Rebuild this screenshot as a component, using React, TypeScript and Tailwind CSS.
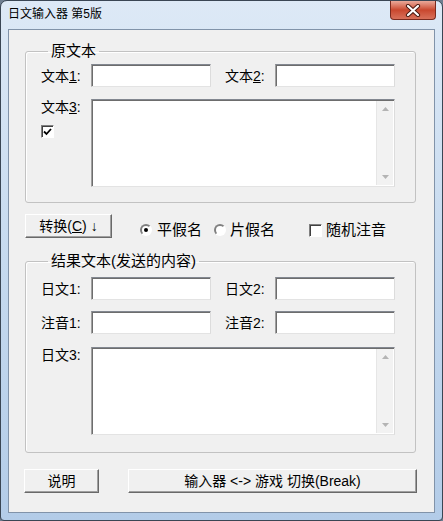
import React from "react";

const font = "font-['Liberation_Sans','Noto_Sans_CJK_SC',sans-serif]";

function Edit({ w }: { w: number }) {
  return (
    <div
      className="h-[23px] bg-white border border-t-[#828790] border-l-[#a0a0a0] border-r-[#dcdcdc] border-b-[#e3e3e3] shadow-[inset_1px_1px_0_#6d6d6d]"
      style={{ width: w }}
    />
  );
}

function Memo() {
  return (
    <div className="w-[304px] h-[88px] flex bg-white border border-t-[#828790] border-l-[#a0a0a0] border-r-[#dcdcdc] border-b-[#e3e3e3] shadow-[inset_1px_1px_0_#6d6d6d]">
      <div className="flex-1" />
      <div className="w-[17px] mt-[1px] mb-[1px] mr-[1px] bg-[#f2f2f2] border-l border-[#e6e6e6] flex flex-col items-center justify-between py-[6px]">
        <svg width="7" height="4" viewBox="0 0 7 4">
          <path d="M0 4 L3.5 0 L7 4 Z" fill="#b4b4b4" />
        </svg>
        <svg width="7" height="4" viewBox="0 0 7 4">
          <path d="M0 0 L3.5 4 L7 0 Z" fill="#b4b4b4" />
        </svg>
      </div>
    </div>
  );
}

function Btn({ w, children, ml }: { w: number; children: React.ReactNode; ml: string }) {
  return (
    <div
      className={`${ml} h-[24px] flex items-center justify-center bg-[#f0f0f0] border border-t-white border-l-white border-r-[#696969] border-b-[#696969] shadow-[inset_-1px_-1px_0_#a0a0a0] text-[14px] leading-[16px] text-black`}
      style={{ width: w }}
    >
      {children}
    </div>
  );
}

function Check({ checked }: { checked?: boolean }) {
  return (
    <span className="w-[13px] h-[13px] bg-white border border-t-[#808080] border-l-[#808080] border-r-white border-b-white shadow-[inset_1px_1px_0_#404040] flex items-center justify-center">
      {checked && (
        <svg width="9" height="8" viewBox="0 0 9 8">
          <path d="M1 3.5 L3.5 6 L8 1" stroke="#000" strokeWidth="1.8" fill="none" />
        </svg>
      )}
    </span>
  );
}

function Radio({ on }: { on?: boolean }) {
  return (
    <span className="w-[12px] h-[12px] rounded-full bg-white border-2 border-t-[#808080] border-l-[#808080] border-r-white border-b-white flex items-center justify-center">
      {on && <span className="w-[4px] h-[4px] rounded-full bg-black" />}
    </span>
  );
}

function Label({ children, className = "" }: { children: React.ReactNode; className?: string }) {
  return <span className={`w-[50px] shrink-0 text-[14px] leading-[16px] ${className}`}>{children}</span>;
}

export default function App() {
  return (
    <div className={`w-[443px] h-[521px] bg-[#6f7f91] ${font} text-black`}>
      <div className="w-[443px] h-[521px] flex flex-col rounded-t-[7px] rounded-b-[4px] border border-[#3a4654] bg-gradient-to-b from-[#dde9f6] via-[#c6daef] to-[#b3cce8] px-[7px] pb-[7px]">
        <div className="h-[28px] flex items-start justify-between">
          <span className="pt-[5px] text-[12px] leading-[16px] text-black">日文输入器 第5版</span>
          <div className="w-[46px] h-[19px] mr-[-1px] rounded-b-[4px] border border-t-0 border-[#7a2a1e] bg-gradient-to-b from-[#e9a99a] via-[#c9472e] to-[#d8705a] flex items-center justify-center">
            <svg width="16" height="13" viewBox="0 0 16 13">
              <path d="M3 2 L13 11 M13 2 L3 11" stroke="#4a1a12" strokeWidth="4.2" strokeLinecap="round" />
              <path d="M3 2 L13 11 M13 2 L3 11" stroke="#fff" strokeWidth="2.2" strokeLinecap="round" />
            </svg>
          </div>
        </div>

        <div className="flex-1 bg-[#f0f0f0] border border-[#8193a9] flex flex-col">
          <fieldset className="ml-[16px] mt-[11px] w-[391px] border border-[#c2c2c2] rounded-[3px] pl-[15px] pb-[15px] shadow-[inset_1px_1px_0_#fff]">
            <legend className="ml-[7px] px-[3px] text-[15px] leading-[20px]">原文本</legend>
            <div className="mt-[3px] flex items-center">
              <Label>
                文本<span className="underline">1</span>:
              </Label>
              <Edit w={120} />
              <Label className="ml-[14px]">
                文本<span className="underline">2</span>:
              </Label>
              <Edit w={120} />
            </div>
            <div className="mt-[12px] flex">
              <div className="w-[50px] flex flex-col">
                <Label>
                  文本<span className="underline">3</span>:
                </Label>
                <span className="mt-[10px]">
                  <Check checked />
                </span>
              </div>
              <Memo />
            </div>
          </fieldset>

          <div className="mt-[11px] h-[24px] flex items-start text-[15px] leading-[18px]">
            <Btn w={87} ml="ml-[16px]">
              转换(<span className="underline">C</span>)&nbsp;↓
            </Btn>
            <span className="ml-[28px] mt-[7px] flex items-center gap-[5px]">
              <Radio on />
              <span>平假名</span>
            </span>
            <span className="ml-[12px] mt-[7px] flex items-center gap-[4px]">
              <Radio />
              <span>片假名</span>
            </span>
            <span className="ml-[34px] mt-[7px] flex items-center gap-[4px]">
              <Check />
              <span>随机注音</span>
            </span>
          </div>

          <fieldset className="ml-[16px] mt-[13px] w-[391px] border border-[#c2c2c2] rounded-[3px] pl-[15px] pb-[17px] shadow-[inset_1px_1px_0_#fff]">
            <legend className="ml-[7px] px-[3px] text-[15px] leading-[20px]">结果文本(发送的内容)</legend>
            <div className="mt-[6px] flex items-center">
              <Label>日文1:</Label>
              <Edit w={120} />
              <Label className="ml-[14px]">日文2:</Label>
              <Edit w={120} />
            </div>
            <div className="mt-[11px] flex items-center">
              <Label>注音1:</Label>
              <Edit w={120} />
              <Label className="ml-[14px]">注音2:</Label>
              <Edit w={120} />
            </div>
            <div className="mt-[13px] flex">
              <Label>日文3:</Label>
              <Memo />
            </div>
          </fieldset>

          <div className="mt-[16px] flex">
            <Btn w={75} ml="ml-[15px]">说明</Btn>
            <Btn w={289} ml="ml-[29px]">
              输入器 &lt;-&gt; 游戏 切换(Break)
            </Btn>
          </div>
        </div>
      </div>
    </div>
  );
}
